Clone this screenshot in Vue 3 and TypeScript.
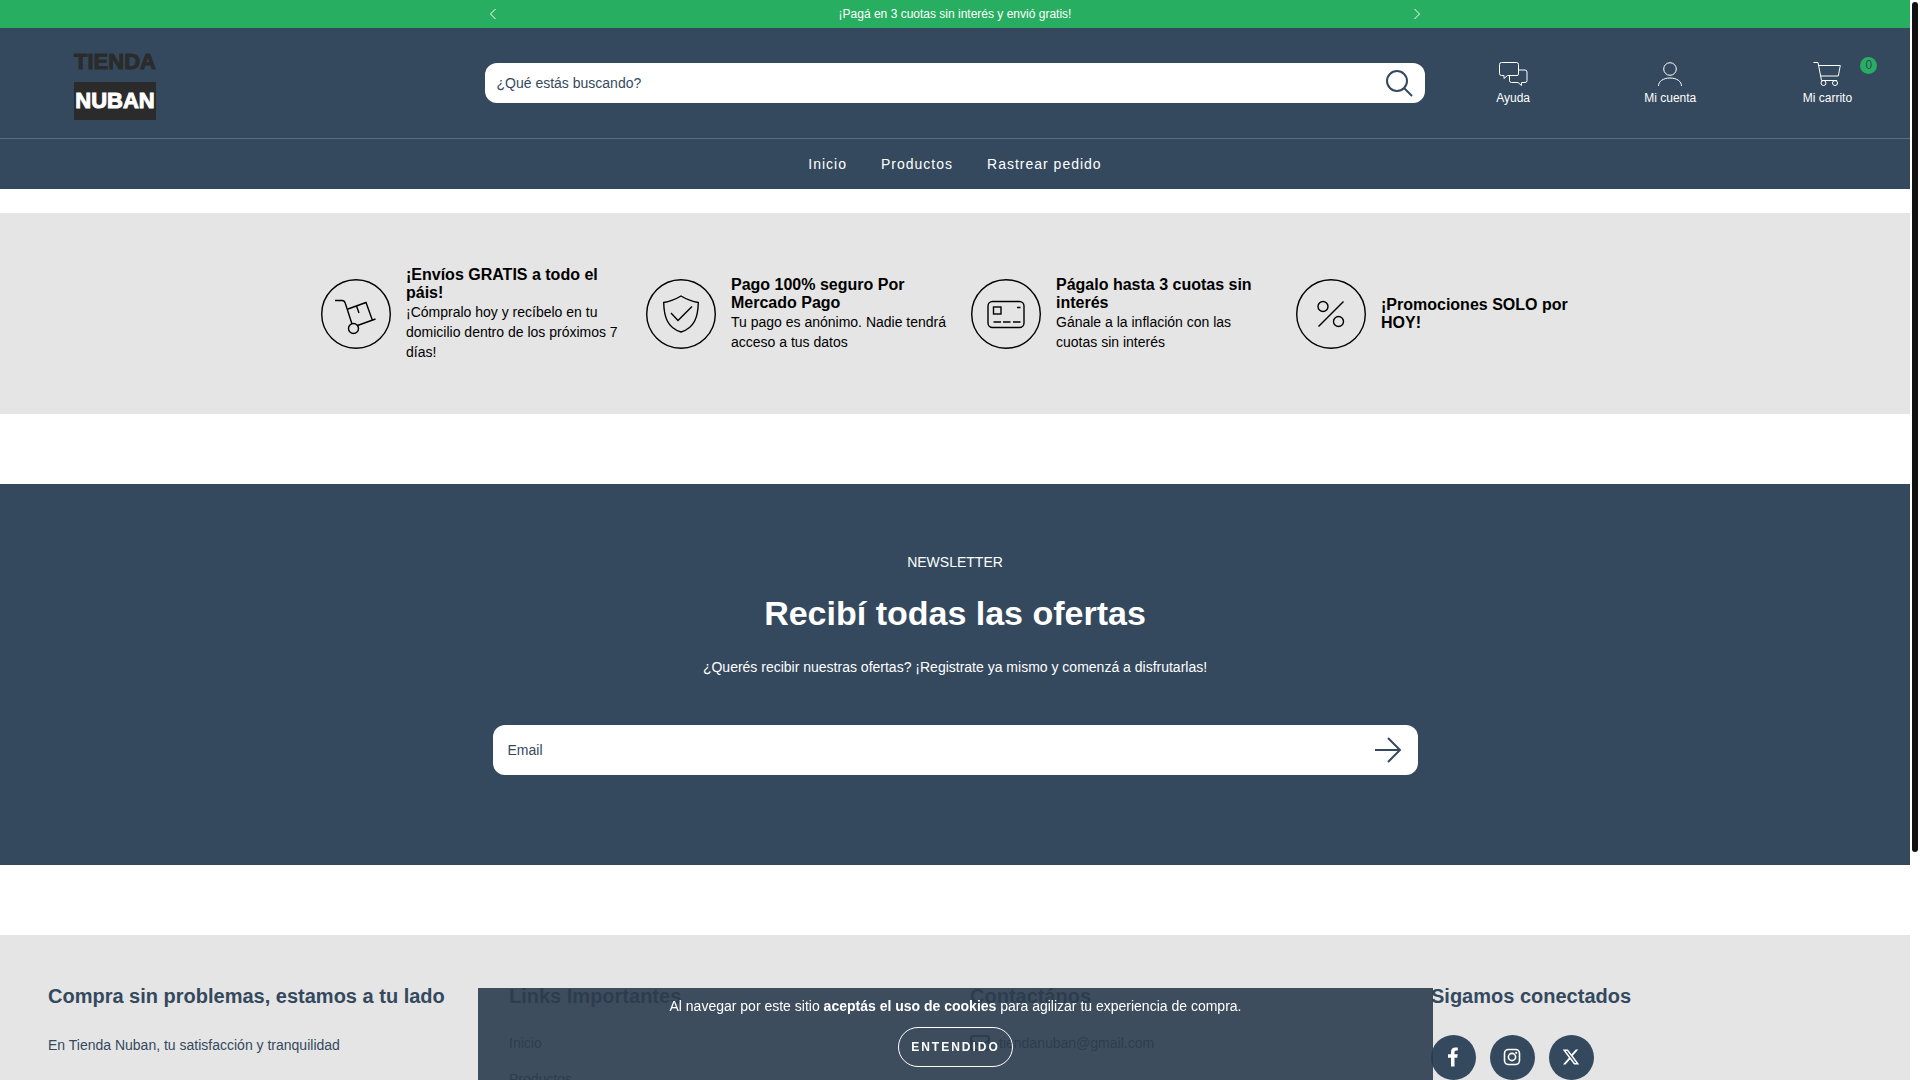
<script setup lang="ts">
import { ref } from 'vue'

interface Service {
  icon: 'truck' | 'shield' | 'card' | 'percent'
  title: string
  text?: string
}

const services: Service[] = [
  { icon: 'truck', title: '¡Envíos GRATIS a todo el páis!', text: '¡Cómpralo hoy y recíbelo en tu domicilio dentro de los próximos 7 días!' },
  { icon: 'shield', title: 'Pago 100% seguro Por Mercado Pago', text: 'Tu pago es anónimo. Nadie tendrá acceso a tus datos' },
  { icon: 'card', title: 'Págalo hasta 3 cuotas sin interés', text: 'Gánale a la inflación con las cuotas sin interés' },
  { icon: 'percent', title: '¡Promociones SOLO por HOY!' },
]

const navLinks = ['Inicio', 'Productos', 'Rastrear pedido']
const query = ref('')
const email = ref('')
const showCookies = ref(true)
</script>

<template>
  <div class="shell">
    <div class="page">
      <div class="promo">
        <div class="promo-inner">
          <button type="button" class="plain" aria-label="Anterior">
            <svg width="8" height="12" viewBox="0 0 8 12"><path d="M6.500 1L1.500 6l5 5" /></svg>
          </button>
          <span>¡Pagá en 3 cuotas sin interés y envió gratis!</span>
          <button type="button" class="plain" aria-label="Siguiente">
            <svg width="8" height="12" viewBox="0 0 8 12"><path d="M1.500 1l5 5-5 5" /></svg>
          </button>
        </div>
      </div>

      <header class="header">
        <div class="header-row">
          <a href="#" class="logo" aria-label="Tienda Nuban">
            <span class="logo-top">TIENDA</span>
            <span class="logo-box">NUBAN</span>
          </a>
          <form class="search" @submit.prevent>
            <input v-model="query" type="search" aria-label="Buscar" placeholder="¿Qué estás buscando?" />
            <button type="submit" class="plain" aria-label="Buscar">
              <svg width="28" height="28" viewBox="0 0 28 28">
                <circle cx="12" cy="12" r="10" />
                <path d="M19 19l8 8" />
              </svg>
            </button>
          </form>
          <div class="utilities">
            <a href="#" class="utility">
              <svg width="30" height="26" viewBox="0 0 30 26">
                <path d="M20 14.500H9.500L6 17.500v-3H3.500a2 2 0 0 1-2-2v-9a2 2 0 0 1 2-2h15a2 2 0 0 1 2 2v9.500a1.500 1.500 0 0 1-1.500 1.500" />
                <path d="M20.500 9H27a2 2 0 0 1 2 2v8.500a2 2 0 0 1-2 2h-3.500v3l-3.500-3h-6.500a2 2 0 0 1-2-2v-5" />
              </svg>
              <span>Ayuda</span>
            </a>
            <a href="#" class="utility">
              <svg width="30" height="26" viewBox="0 0 30 26">
                <circle cx="15" cy="8" r="6.300" />
                <path d="M3.500 25c0-4.500 4.500-8 11.500-8s11.500 3.500 11.500 8" />
              </svg>
              <span>Mi cuenta</span>
            </a>
            <a href="#" class="utility">
              <svg width="30" height="26" viewBox="0 0 30 26">
                <path d="M1.500 1.500H6L9.500 19.500H25M6.800 4.500h21.500l-2 10.500H8.700" />
                <circle cx="11.500" cy="22" r="2.500" />
                <circle cx="23" cy="22" r="2.500" />
              </svg>
              <span>Mi carrito</span>
              <span class="badge">0</span>
            </a>
          </div>
        </div>
        <nav class="nav">
          <a v-for="link in navLinks" :key="link" href="#">{{ link }}</a>
        </nav>
      </header>

      <section class="services">
        <div class="services-inner">
          <article v-for="service in services" :key="service.title" class="service">
            <svg class="service-icon" width="70" height="70" viewBox="0 0 70 70">
              <circle cx="35" cy="35" r="34.300" />
              <g v-if="service.icon === 'truck'">
                <path d="M14 21.500h7q2.500 0 3.200 2.500L31 45M27 30l18-6.500 6.500 18M36.500 46.500l18-6.500M35.500 27l2.500 7" />
                <circle cx="32.500" cy="49.500" r="5" />
              </g>
              <g v-else-if="service.icon === 'shield'">
                <path d="M35 17c5 3 11 5.500 17.300 6.500C52 37 49 49 35 53 21 49 18 37 17.700 23.500 24 22.500 30 20 35 17z" />
                <path d="M25 34l7 7.500 14-14" />
              </g>
              <g v-else-if="service.icon === 'card'">
                <rect x="17" y="22.500" width="36" height="26" rx="4.500" />
                <rect x="22.500" y="28" width="7.500" height="7" />
                <path d="M46 28.500h3.500M22.500 43H30M32 43h7.500M42 43h7.500" />
              </g>
              <g v-else>
                <circle cx="27" cy="27.500" r="5" />
                <circle cx="42.500" cy="42.500" r="5" />
                <path d="M22.500 47.500l25-25" />
              </g>
            </svg>
            <div>
              <h3>{{ service.title }}</h3>
              <p v-if="service.text">{{ service.text }}</p>
            </div>
          </article>
        </div>
      </section>

      <section class="newsletter">
        <p>NEWSLETTER</p>
        <h2>Recibí todas las ofertas</h2>
        <p>¿Querés recibir nuestras ofertas? ¡Registrate ya mismo y comenzá a disfrutarlas!</p>
        <form class="subscribe" @submit.prevent>
          <input v-model="email" type="email" aria-label="Email" placeholder="Email" />
          <button type="submit" class="plain" aria-label="Enviar">
            <svg width="28" height="28" viewBox="0 0 28 28"><path d="M1 14h25M14 2l12 12-12 12" /></svg>
          </button>
        </form>
      </section>

      <footer class="footer">
        <div>
          <h4>Compra sin problemas, estamos a tu lado</h4>
          <p>En Tienda Nuban, tu satisfacción y tranquilidad</p>
        </div>
        <div>
          <h4>Links Importantes</h4>
          <ul>
            <li v-for="link in navLinks" :key="link"><a href="#">{{ link }}</a></li>
          </ul>
        </div>
        <div>
          <h4>Contactános</h4>
          <ul>
            <li>
              <a href="mailto:tiendanuban@gmail.com" class="mail">
                <svg width="20" height="16" viewBox="0 0 20 16">
                  <rect x="1" y="1" width="18" height="14" rx="2" />
                  <path d="M1 5l7 5q2 1.500 4 0l7-5" />
                </svg>
                tiendanuban@gmail.com
              </a>
            </li>
          </ul>
        </div>
        <div>
          <h4>Sigamos conectados</h4>
          <div class="social">
            <a href="#" aria-label="Facebook">
              <svg width="20" height="20" viewBox="0 0 20 20">
                <path class="solid" d="M8 19.500v-8.700H5V7.300h3V4.800C8 1.900 9.700.4 12.300.4c1.200 0 2.500.2 2.500.2v2.800h-1.400c-1.400 0-1.900.9-1.900 1.800v2.100h3.200l-.5 3.500h-2.700v8.700z" />
              </svg>
            </a>
            <a href="#" aria-label="Instagram">
              <svg width="20" height="20" viewBox="0 0 20 20">
                <rect x="2.500" y="2.500" width="15" height="15" rx="4" />
                <circle cx="10" cy="10" r="3.600" />
                <circle class="solid" cx="14.200" cy="5.800" r="1.100" />
              </svg>
            </a>
            <a href="#" aria-label="X">
              <svg width="20" height="20" viewBox="0 0 20 20">
                <path class="solid" fill-rule="evenodd" d="M14.800 2.500h2.500l-5.600 6.300 6.500 8.700h-5.100l-4-5.300-4.600 5.300H2l5.900-6.800L1.700 2.500h5.200l3.600 4.800zM13.900 16h1.400L6.200 3.900H4.700z" />
              </svg>
            </a>
          </div>
        </div>
      </footer>
    </div>

    <div v-if="showCookies" class="cookies">
      <p>Al navegar por este sitio <strong>aceptás el uso de cookies</strong> para agilizar tu experiencia de compra.</p>
      <button type="button" @click="showCookies = false">ENTENDIDO</button>
    </div>
    <div class="rail" aria-hidden="true"><div class="thumb"></div></div>
  </div>
</template>

<style>
body {
  margin: 0;
  background: #fff;
}
</style>

<style scoped>
.shell {
  --navy: #34495e;
  --green: #27ae60;
  --gray: #e5e5e5;
  display: flex;
  height: 100vh;
  overflow: hidden;
  font: 14px/20px "Liberation Sans", Arial, sans-serif;
  color: var(--navy);
}
.shell * {
  box-sizing: border-box;
}
.page {
  flex: 1;
  min-width: 0;
}
h2, h3, h4, p, ul {
  margin: 0;
  padding: 0;
}
ul {
  list-style: none;
}
a {
  color: inherit;
  text-decoration: none;
}
svg {
  display: block;
  flex: none;
  fill: none;
  stroke: currentColor;
}
input {
  flex: 1;
  min-width: 0;
  padding: 0;
  border: 0;
  outline: 0;
  background: none;
  font: inherit;
  color: inherit;
}
input::placeholder {
  color: inherit;
  opacity: 1;
}
.plain {
  padding: 0;
  border: 0;
  background: none;
  color: inherit;
  cursor: pointer;
}
.promo {
  background: var(--green);
  color: #fff;
  font-size: 12px;
}
.promo-inner {
  display: flex;
  align-items: center;
  justify-content: space-between;
  width: 933px;
  max-width: 90%;
  height: 28px;
  margin: 0 auto;
}
.header {
  background: var(--navy);
  color: #fff;
}
.header-row {
  display: grid;
  grid-template-columns: 1fr 2fr 1fr;
  align-items: center;
  height: 110px;
}
.logo {
  display: flex;
  flex-direction: column;
  justify-self: start;
  gap: 6px;
  width: 82px;
  margin-left: 74px;
  padding-top: 1px;
  text-align: center;
  font: bold 22px/28px "Liberation Sans", Arial, sans-serif;
  -webkit-text-stroke: 1px currentColor;
}
.logo-top {
  color: #2b2b2b;
}
.logo-box {
  background: #2b2b2b;
  line-height: 38px;
}
.search {
  display: flex;
  align-items: center;
  height: 40px;
  margin: 0 8px 0 7px;
  padding: 0 12px;
  border-radius: 12px;
  background: #fff;
  color: var(--navy);
}
.search svg,
.subscribe svg {
  stroke-width: 2;
}
.utilities {
  display: grid;
  grid-template-columns: repeat(3, 1fr);
  padding: 2px 4px 0 2px;
}
.utility {
  position: relative;
  display: flex;
  flex-direction: column;
  align-items: center;
  gap: 1px;
  font-size: 12px;
}
.badge {
  position: absolute;
  top: -4px;
  left: calc(50% + 33px);
  width: 17px;
  height: 17px;
  border-radius: 50%;
  background: var(--green);
  color: var(--navy);
  line-height: 17px;
  text-align: center;
}
.nav {
  display: flex;
  justify-content: center;
  align-items: center;
  gap: 34px;
  height: 51px;
  border-top: 1px solid #5d6d7e;
  letter-spacing: 1px;
}
.services {
  margin-top: 24px;
  padding: 53px 0 52px;
  background: var(--gray);
  color: #000;
}
.services-inner {
  display: grid;
  grid-template-columns: repeat(4, 1fr);
  max-width: 1300px;
  margin: 0 auto;
}
.service {
  display: flex;
  align-items: center;
  gap: 15px;
  padding: 0 4px 0 16px;
}
.service-icon {
  stroke-width: 1.4;
}
h3 {
  font-size: 16px;
  line-height: 18px;
}
.newsletter {
  margin-top: 70px;
  padding: 68px 0 90px;
  background: var(--navy);
  color: #fff;
  text-align: center;
}
h2 {
  margin: 21px 0 23px;
  font-size: 34px;
  line-height: 41px;
}
.subscribe {
  display: flex;
  align-items: center;
  width: 925px;
  max-width: 90%;
  height: 50px;
  margin: 48px auto 0;
  padding: 0 16px 0 15px;
  border-radius: 12px;
  background: #fff;
  color: var(--navy);
}
.footer {
  display: grid;
  grid-template-columns: repeat(4, 1fr);
  gap: 30px;
  margin-top: 70px;
  padding: 48px;
  background: var(--gray);
}
h4 {
  margin-bottom: 25px;
  font-size: 20px;
  line-height: 27px;
}
.footer li {
  height: 36px;
  line-height: 16px;
}
.mail {
  display: flex;
  align-items: center;
  gap: 9px;
}
.mail svg {
  stroke-width: 2;
}
.social {
  display: flex;
  gap: 14px;
}
.social a {
  display: grid;
  place-items: center;
  width: 45px;
  height: 45px;
  padding: 0 1px 2px 0;
  border-radius: 50%;
  background: var(--navy);
  color: #fff;
}
.social svg {
  stroke-width: 1.6;
}
.solid {
  fill: currentColor;
  stroke: none;
}
.cookies {
  position: fixed;
  bottom: 0;
  left: calc(25% - 2px);
  width: calc(50% - 5px);
  padding: 8px 0 13px;
  background: rgba(43, 60, 78, 0.9);
  color: #fff;
  text-align: center;
}
.cookies button {
  height: 40px;
  margin-top: 11px;
  padding: 0 12px;
  border: 1px solid #fff;
  border-radius: 20px;
  background: none;
  color: #fff;
  font: bold 12px/20px "Liberation Sans", Arial, sans-serif;
  letter-spacing: 2px;
}
.rail {
  width: 10px;
  padding: 2px;
  background: #fff;
}
.thumb {
  width: 6px;
  height: 79%;
  border-radius: 3px;
  background: #111;
}
</style>
